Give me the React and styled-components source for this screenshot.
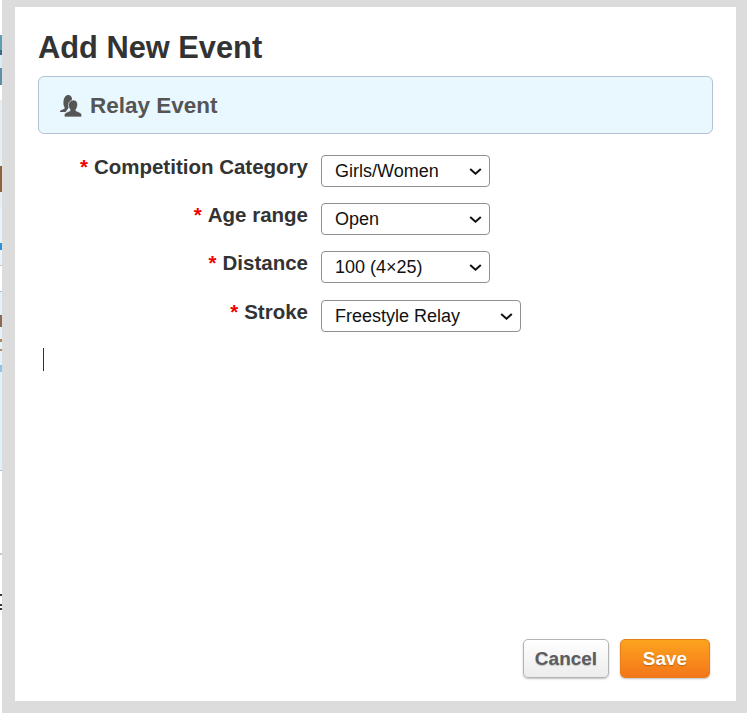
import React from 'react'
import styled, { createGlobalStyle } from 'styled-components'

const GlobalStyle = createGlobalStyle`
html, body {
    margin: 0;
    padding: 0;
    background: #fff;
}
`

const Page = styled.div`
display: flex;
width: 747px;
height: 713px;
overflow: hidden;
font-family: "Liberation Sans", Arial, sans-serif;
`

const BackdropStrip = styled.div`
width: 2px;
flex: none;
display: flex;
flex-direction: column;
`

const StripPiece = styled.div`
flex: none;
height: ${props => props.h}px;
background: ${props => props.c};
`

const Frame = styled.div`
flex: 1;
display: flex;
background: #dcdcdc;
padding: 7px 11px 12px 13px;
`

const Dialog = styled.div`
flex: 1;
display: flex;
flex-direction: column;
background: #fff;
padding: 22px 23px 23px 23px;
`

const Title = styled.h1`
margin: 0 0 10px;
font-size: 30.800px;
line-height: 37px;
font-weight: 700;
color: #333;
`

const Banner = styled.div`
display: flex;
align-items: center;
gap: 8px;
height: 58px;
padding: 2px 0 0 21px;
box-sizing: border-box;
background: #e9f8ff;
border: 1px solid #b0c4d4;
border-radius: 6px;
font-size: 22.500px;
font-weight: 700;
color: #555;
`

const Form = styled.div`
display: flex;
flex-direction: column;
margin-top: 21px;
`

const Row = styled.div`
display: grid;
grid-template-columns: 270px auto;
column-gap: 13px;
justify-content: start;
align-items: start;
height: ${props => props.h}px;
`

const Label = styled.label`
text-align: right;
font-size: 20.500px;
line-height: 24px;
font-weight: 700;
color: #333;
`

const Req = styled.span`
color: #f00000;
margin-right: 6px;
`

const chevron = encodeURIComponent('<svg xmlns="http://www.w3.org/2000/svg" width="13" height="7" viewBox="0 0 13 7"><path d="M1.200 1l5.300 4.700L11.800 1" fill="none" stroke="#111" stroke-width="2"/></svg>')

const Select = styled.select`
appearance: none;
width: ${props => props.w}px;
height: 32px;
padding: 0 24px 0 13px;
box-sizing: border-box;
background: #fff url("data:image/svg+xml,${chevron}") no-repeat right 7px center;
border: 1px solid #8f8f8f;
border-radius: 4px;
font-family: "Liberation Sans", Arial, sans-serif;
font-size: 18px;
color: #111;
`

const CursorLine = styled.div`
width: 1px;
height: 23px;
margin: 16px 0 0 5px;
background: #333;
`

const Actions = styled.div`
margin-top: auto;
display: flex;
justify-content: flex-end;
gap: 11px;
padding-right: 3px;
`

const ActionButton = styled.button`
height: 39px;
width: ${props => props.w}px;
padding: 0;
border-radius: 5px;
font-family: "Liberation Sans", Arial, sans-serif;
font-size: 19px;
font-weight: 700;
box-shadow: 0 1px 2px rgba(0, 0, 0, .25);
`

const CancelButton = styled(ActionButton)`
color: #5c5c60;
background: linear-gradient(#fff, #ececec);
border: 1px solid #b4b4b4;
text-shadow: 0 1px 1px rgba(0, 0, 0, .2);
`

const SaveButton = styled(ActionButton)`
color: #fff;
background: linear-gradient(#fda31e, #f3761a);
border: 1px solid #e8801a;
text-shadow: 0 1px 1px rgba(0, 0, 0, .25);
`

const stripPieces = [
    [35, '#ffffff'], [15, '#5f9db4'], [5, '#3a6a88'], [13, '#d8ecf8'], [17, '#5f8fa8'], [15, '#ffffff'],
    [66, '#e6eef4'], [26, '#8a6438'], [16, '#e6eef4'], [35, '#e8f4fa'], [7, '#2e90d8'],
    [15, '#e8f4fa'], [1, '#c0c8cc'], [25, '#ffffff'], [1, '#b0bcc8'], [23, '#e2f2fb'],
    [12, '#8a6a50'], [12, '#e2f2fb'], [3, '#b08a50'], [7, '#e2f2fb'], [2, '#b08a50'],
    [14, '#e2f2fb'], [7, '#8cc4e8'], [98, '#dff1fa'], [1, '#b0bcc8'], [82, '#ffffff'],
    [2, '#c8c8c8'], [39, '#ffffff'], [2, '#33364a'], [8, '#ffffff'], [2, '#33364a'],
    [2, '#ffffff'], [2, '#33364a'], [103, '#ffffff'],
]

const RelayIcon = () => (
    <svg width="22" height="22" viewBox="0 0 22 22" fill="#555">
        <path d="M8.200 0c2.300 0 3.800 1.700 3.800 4 0 1.800-.6 3.200-1.300 4.100-.4.600-.3 1.100.3 1.400L5.500 17H.5c-.4 0-.6-.3-.5-.7.4-1 2.200-1.600 3.900-2.300.8-.4 1-1 .6-1.700C3.600 10.900 3.300 9.500 3.500 6.500 3.800 2.500 5.800 0 8.200 0z"/>
        <path d="M13.500 5c2.500 0 4.100 1.900 4.100 4.500 0 2-.7 3.700-1.500 4.800-.5.800-.3 1.400.4 1.800 1.800.8 4.300 1.500 5 3 .3.700.5 2.900-.5 2.900H5c-1 0-.8-2.200-.5-2.900.7-1.500 3.200-2.200 5-3 .7-.4.900-1 .4-1.800-.8-1.100-1.500-2.800-1.500-4.800C8.900 6.900 11 5 13.500 5z" stroke="#e9f8ff" strokeWidth=".7"/>
    </svg>
)

const App = () => {
    return (
        <Page>
            <GlobalStyle />
            <BackdropStrip>
                {stripPieces.map(([h, c], i) => <StripPiece key={i} h={h} c={c} />)}
            </BackdropStrip>
            <Frame>
                <Dialog>
                    <Title>Add New Event</Title>
                    <Banner><RelayIcon />Relay Event</Banner>
                    <Form>
                        <Row h={48}>
                            <Label><Req>*</Req>Competition Category</Label>
                            <Select w={169} defaultValue="Girls/Women">
                                <option>Girls/Women</option>
                                <option>Boys/Men</option>
                            </Select>
                        </Row>
                        <Row h={48}>
                            <Label><Req>*</Req>Age range</Label>
                            <Select w={169} defaultValue="Open">
                                <option>Open</option>
                            </Select>
                        </Row>
                        <Row h={49}>
                            <Label><Req>*</Req>Distance</Label>
                            <Select w={169} defaultValue="100 (4×25)">
                                <option>100 (4×25)</option>
                            </Select>
                        </Row>
                        <Row h={32}>
                            <Label><Req>*</Req>Stroke</Label>
                            <Select w={200} defaultValue="Freestyle Relay">
                                <option>Freestyle Relay</option>
                            </Select>
                        </Row>
                    </Form>
                    <CursorLine />
                    <Actions>
                        <CancelButton w={86}>Cancel</CancelButton>
                        <SaveButton w={90}>Save</SaveButton>
                    </Actions>
                </Dialog>
            </Frame>
        </Page>
    )
}

export default App
